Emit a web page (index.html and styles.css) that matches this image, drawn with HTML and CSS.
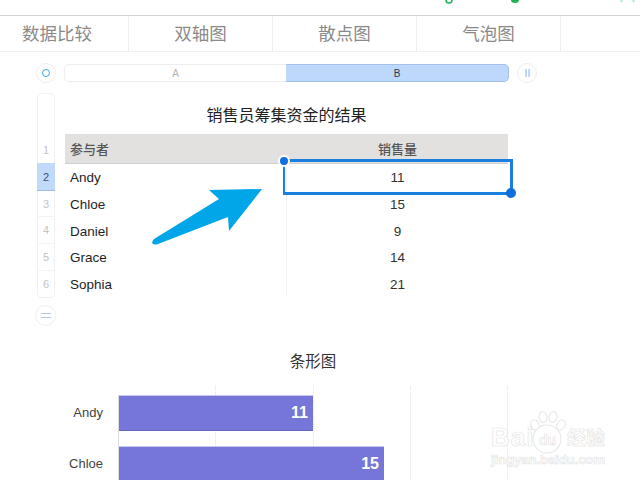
FILE: index.html
```html
<!DOCTYPE html>
<html lang="zh">
<head>
<meta charset="utf-8">
<title>条形图</title>
<link rel="stylesheet" href="styles.css">
</head>
<body>
<div class="page">
  <nav class="tabs">
    <div class="tab tab-1">数据比较</div>
    <div class="tab">双轴图</div>
    <div class="tab">散点图</div>
    <div class="tab">气泡图</div>
    <div class="tab tab-last"></div>
  </nav>

  <div class="colbar">
    <div class="round-btn"><span class="ring"></span></div>
    <div class="columns">
      <div class="col col-a">A</div>
      <div class="col col-b">B</div>
    </div>
    <div class="round-btn"><span class="bars"></span></div>
  </div>

  <div class="sheet">
    <div class="rowhead-wrap">
      <div class="rowhead">
        <div class="rh rh-1">1</div>
        <div class="rh rh-sel">2</div>
        <div class="rh">3</div>
        <div class="rh">4</div>
        <div class="rh">5</div>
        <div class="rh rh-end">6</div>
      </div>
      <div class="round-btn eq-btn"><span class="eq"></span></div>
    </div>
    <div class="table-area">
      <h2 class="table-title">销售员筹集资金的结果</h2>
      <div class="table">
        <div class="cell head left">参与者</div><div class="cell head center">销售量</div>
        <div class="cell left">Andy</div><div class="cell center">11</div>
        <div class="cell left">Chloe</div><div class="cell center">15</div>
        <div class="cell left">Daniel</div><div class="cell center">9</div>
        <div class="cell left">Grace</div><div class="cell center">14</div>
        <div class="cell left">Sophia</div><div class="cell center">21</div>
      </div>
    </div>
  </div>

  <section class="chart">
    <h2 class="chart-title">条形图</h2>
    <div class="plot">
      <div class="bar-label">Andy</div>
      <div class="bar-track"><div class="bar" style="width:194px">11</div></div>
      <div class="bar-label">Chloe</div>
      <div class="bar-track"><div class="bar" style="width:265px">15</div></div>
      <div class="gridlines">
        <span class="gl"></span><span class="gl"></span><span class="gl"></span><span class="gl"></span>
      </div>
    </div>
  </section>

  <svg class="status-bits" width="640" height="6" viewBox="0 0 640 6">
    <path d="M446 0a3 3 0 0 0 6 0" fill="none" stroke="#1fb356" stroke-width="1.6"/>
    <path d="M511 0a4 3 0 0 0 8 0z" fill="#1fb356"/>
    <path d="M621 0l1 2M634 0l-1 2" stroke="#a5f0c5" stroke-width="2"/>
  </svg>

  <div class="selection">
    <span class="handle handle-tl"></span>
    <span class="handle handle-br"></span>
  </div>

  <svg class="arrow" width="640" height="480" viewBox="0 0 640 480">
    <path d="M262 189L209 190L219 199L154 239Q151 242 153 244Q155 245 158 244L228 217L229 231Z" fill="#00a6e8"/>
  </svg>

  <div class="watermark">
    <svg class="paw" width="40" height="50" viewBox="0 0 40 50">
      <g fill="#fff" stroke="#e8e8e8" stroke-width="1.1">
        <ellipse cx="6" cy="15" rx="4" ry="5.5" transform="rotate(-25 6 15)"/>
        <ellipse cx="14" cy="7" rx="4" ry="5.5" transform="rotate(-8 14 7)"/>
        <ellipse cx="24" cy="7" rx="4" ry="5.5" transform="rotate(10 24 7)"/>
        <ellipse cx="32" cy="15" rx="4" ry="5.5" transform="rotate(30 32 15)"/>
        <circle cx="18" cy="29" r="14"/>
      </g>
    </svg>
    <span class="wm-bai">Bai</span>
    <span class="wm-du">du</span>
    <span class="wm-jy">经验</span>
    <span class="wm-url">jingyan.baidu.com</span>
  </div>
</div>
</body>
</html>
```

FILE: styles.css
```css
* { box-sizing: border-box; }
html, body { margin: 0; padding: 0; background: #fff; }
.page {
  position: relative;
  width: 640px;
  height: 480px;
  overflow: hidden;
  background: #fff;
  font-family: "Liberation Sans", "Noto Sans CJK SC", sans-serif;
  color: #222;
}

/* tabs */
.tabs {
  display: flex;
  margin-top: 15px;
  height: 37px;
  border-top: 1px solid #d4d4d4;
  border-bottom: 1px solid #f0f0f0;
}
.tab {
  width: 144px;
  flex: none;
  display: flex;
  align-items: center;
  justify-content: center;
  font-family: "Noto Sans CJK SC", sans-serif;
  font-size: 17.5px;
  color: #8a8a8a;
  border-right: 1px solid #eeeeee;
  padding-bottom: 2px;
}
.tab-1 { width: 129px; justify-content: flex-start; padding-left: 22px; }
.tab-last { width: 80px; border-right: 0; }

/* column header bar */
.colbar {
  display: flex;
  align-items: center;
  margin-top: 11px;
  padding-left: 36px;
  height: 20px;
}
.round-btn {
  width: 20px;
  height: 20px;
  flex: none;
  border-radius: 50%;
  border: 1px solid #eeeeee;
  background: #fff;
  display: flex;
  align-items: center;
  justify-content: center;
}
.ring {
  width: 8px;
  height: 8px;
  border-radius: 50%;
  border: 1.5px solid #3aa7f0;
}
.bars {
  width: 5px;
  height: 8px;
  border-left: 2px solid #c3d6f3;
  border-right: 2px solid #c3d6f3;
}
.columns {
  display: flex;
  width: 445px;
  height: 18px;
  margin: 0 8px;
  font-size: 10px;
}
.col {
  display: flex;
  align-items: center;
  justify-content: center;
}
.col-a {
  width: 222px;
  color: #b5b5b5;
  border: 1px solid #eeeeee;
  border-right: 0;
  border-radius: 5px 0 0 5px;
}
.col-b {
  width: 223px;
  color: #2a3a55;
  background: #bdd8fb;
  border: 1px solid #a5c0ea;
  border-left: 0;
  border-radius: 0 5px 5px 0;
}

/* sheet */
.sheet {
  display: flex;
  margin-top: 10px;
  padding-left: 37px;
}
.rowhead-wrap {
  width: 18px;
  flex: none;
  position: relative;
}
.rowhead {
  width: 18px;
  height: 205px;
  border: 1px solid #f0f0f0;
  border-top-color: #f3f3f3;
  border-radius: 5px;
  padding-top: 40px;
  display: flex;
  flex-direction: column;
  font-size: 11px;
  color: #c4c4c4;
}
.rh {
  height: 27px;
  display: flex;
  align-items: center;
  justify-content: center;
  border-bottom: 1px solid #f4f4f4;
  margin: 0 -1px;
}
.rh-1 { height: 30px; border-bottom: 0; padding-top: 2px; }
.rh-sel {
  height: 28px;
  background: #c1daf9;
  border-bottom: 1px solid #9fbde8;
  color: #3d4f73;
}
.rh-end { border-bottom: 0; }
.eq-btn {
  margin: 7px 0 0 -2px;
  width: 21px;
  height: 21px;
}
.eq {
  width: 10px;
  height: 5px;
  border-top: 1.5px solid #b4c6e8;
  border-bottom: 1.5px solid #b4c6e8;
}
.table-area {
  width: 443px;
  margin-left: 10px;
}
.table-title {
  margin: 0;
  height: 41px;
  padding-top: 10px;
  font-family: "Noto Sans CJK SC", sans-serif;
  font-weight: 400;
  font-size: 16px;
  line-height: 22px;
  text-align: center;
  color: #222;
}
.table {
  display: grid;
  grid-template-columns: 222px 221px;
  grid-template-rows: 30px 27px 27px 26px 27px 26px;
  font-size: 13.5px;
}
.cell {
  display: flex;
  align-items: center;
  color: #1e1e1e;
}
.left { padding-left: 5px; border-right: 1px solid #f0f0f0; }
.center { justify-content: center; color: #333; }
.head {
  background: #e3e1e0;
  border-bottom: 1px solid #cfcfcf;
  border-right: 0;
  font-family: "Noto Sans CJK SC", sans-serif;
  font-size: 13px;
  color: #555;
  font-weight: 500;
}

/* chart */
.chart { margin-top: 0; }
.chart-title {
  margin: 0;
  padding-top: 23px;
  height: 60px;
  font-family: "Noto Sans CJK SC", sans-serif;
  font-weight: 400;
  font-size: 15.5px;
  line-height: 22px;
  text-align: center;
  padding-right: 14px;
  color: #333;
}
.plot {
  position: relative;
  display: grid;
  grid-template-columns: 103px 1fr;
  grid-auto-rows: 51px;
  padding-top: 9px;
  font-size: 13px;
}
.bar-label {
  height: 35px;
  display: flex;
  align-items: center;
  justify-content: flex-end;
  color: #444;
}
.bar-track {
  margin-left: 15px;
  height: 51px;
  border-left: 1px solid #dcdcdc;
}
.bar {
  height: 36px;
  background: #7676d8;
  border-top: 1px solid #c9c9ee;
  border-bottom: 1px solid #6666c4;
  color: #fff;
  font-size: 16px;
  font-weight: 700;
  display: flex;
  align-items: center;
  justify-content: flex-end;
  padding-right: 5px;
}
.gridlines {
  position: absolute;
  left: 119px;
  top: 0;
  bottom: 0;
  display: flex;
  pointer-events: none;
}
.gl {
  width: 97.3px;
  border-right: 1px dotted rgba(120, 120, 150, 0.22);
}

/* overlays */
.status-bits { position: absolute; left: 0; top: 0; }
.selection {
  position: absolute;
  left: 283px;
  top: 159px;
  width: 230px;
  height: 36px;
  border: 3px solid #1b7fe0;
  border-width: 3px 3px 3px 2px;
}
.handle {
  position: absolute;
  width: 10px;
  height: 10px;
  border-radius: 50%;
  background: #0f6ee0;
}
.handle-tl {
  left: -7px;
  top: -7px;
  width: 12px;
  height: 12px;
  border: 2px solid #fff;
}
.handle-br { right: -6px; bottom: -6px; }
.arrow { position: absolute; left: 0; top: 0; pointer-events: none; }

/* watermark */
.watermark {
  position: absolute;
  left: 488px;
  top: 410px;
  width: 130px;
  height: 60px;
  pointer-events: none;
}
.watermark span {
  position: absolute;
  color: #fff;
  -webkit-text-stroke: 0.7px #e6e6e6;
  font-weight: 700;
  line-height: 1;
}
.paw { position: absolute; left: 41px; top: 0; }
.wm-bai { left: 3px; top: 14px; font-size: 26px; letter-spacing: 1px; }
.wm-du { left: 51px; top: 23px; font-size: 14px; }
.wm-jy {
  left: 79px;
  top: 17px;
  font-size: 19px;
  font-family: "Noto Sans CJK SC", sans-serif;
}
.wm-url { left: 3px; top: 43px; font-size: 13px; font-weight: 400; white-space: nowrap; }
```
